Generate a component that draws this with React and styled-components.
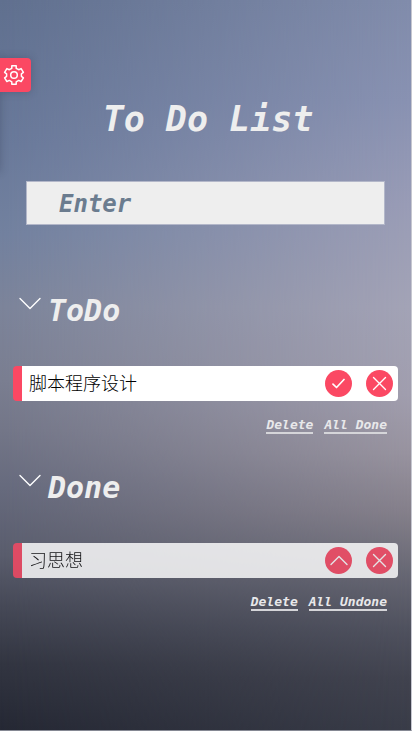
import React, { useState } from "react";
import styled, { createGlobalStyle } from "styled-components";

const GlobalStyle = createGlobalStyle`
  * { box-sizing: border-box; }
  body { margin: 0; }
  button, input { font: inherit; }
`;

const script = `"DejaVu Sans Mono", "Liberation Mono", monospace`;

const Page = styled.div`
  position: relative;
  isolation: isolate;
  min-height: 100vh;
  overflow: hidden;
  padding: 92px 13px 0;
  border-right: 1px solid #c6c7d0;
  border-bottom: 1px solid #858893;
  color: #eeeeee;
  font-family: ${script};
  background: linear-gradient(
    180deg, #60708f 0%, #69799a 20%, #72819f 32%, #7c849a 42%, #7a7e91 52%,
    #737688 59%, #666a7d 67%, #5a5d6d 76%, #464957 83%, #323541 91%, #252834 100%
  );

  &::before {
    content: "";
    position: absolute;
    inset: 0;
    z-index: -1;
    background: linear-gradient(
      180deg, #818cab 0%, #8992b2 14%, #999cb6 28%, #a3a3b6 42%, #a19eae 54%,
      #98939f 62%, #85808b 70%, #696975 78%, #50525f 86%, #41434f 93%, #393c48 100%
    );
    mask-image: linear-gradient(90deg, transparent, #000);
  }
`;

const Settings = styled.aside`
  position: absolute;
  top: 58px;
  left: -240px;
  width: 240px;
  height: 114px;
  box-shadow: 0 0 8px rgba(40, 50, 70, 0.3);
`;

const SettingsButton = styled.button`
  position: absolute;
  top: 0;
  left: 100%;
  display: grid;
  place-items: center;
  width: 31px;
  height: 34px;
  padding: 0 3px 0 0;
  border: 0;
  border-radius: 0 4px 4px 0;
  color: #ffffff;
  background: #fb4863;
  box-shadow: 0 0 8px rgba(40, 50, 70, 0.3);
`;

const Title = styled.h1`
  margin: 0;
  padding-left: 5px;
  font: italic bold 35px/54px ${script};
  text-align: center;
`;

const Entry = styled.form`
  margin: 35px 13px 0;
`;

const EntryInput = styled.input`
  display: block;
  width: 100%;
  height: 44px;
  padding: 2px 32px 0;
  border: 1px solid #b3b7c9;
  border-radius: 0;
  outline: 0;
  color: #6b7c8f;
  background: #eeeeee;
  font: italic bold 24px/32px ${script};

  &::placeholder { color: #6b7c8f; opacity: 1; }
`;

const Section = styled.section`
  padding-top: 64px;

  & + & { padding-top: 32px; }
`;

const SectionHeader = styled.header`
  display: flex;
  align-items: flex-start;
  gap: 6px;
  padding-left: 5px;
`;

const Fold = styled.button`
  display: flex;
  padding: 7px 0 0;
  border: 0;
  color: #ffffff;
  background: none;
`;

const SectionTitle = styled.h2`
  margin: 0;
  font: italic bold 30px/44px ${script};
`;

const List = styled.ul`
  margin: 33px 0 0;
  padding: 0;
  list-style: none;
`;

const Item = styled.li`
  display: flex;
  align-items: center;
  height: 35px;
  padding-right: 5px;
  border-left: 9px solid #fb4863;
  border-radius: 4px;
  background: #ffffff;
  opacity: ${({ $done }) => ($done ? 0.82 : 1)};
`;

const ItemText = styled.span`
  flex: 1;
  padding: 0 0 2px 7px;
  color: #000000;
  font: 300 18px/27px "Noto Sans CJK SC", sans-serif;
`;

const RoundButton = styled.button`
  display: grid;
  place-items: center;
  width: 27px;
  height: 27px;
  margin-left: 14px;
  padding: 0;
  border: 0;
  border-radius: 50%;
  color: #ffffff;
  background: #fb4863;
`;

const Actions = styled.div`
  display: flex;
  justify-content: flex-end;
  gap: 11px;
  padding: 16px 11px 0 0;
`;

const Action = styled.button`
  padding: 0;
  border: 0;
  border-bottom: 2px solid #d5d5d9;
  color: #e8e8ea;
  background: none;
  font: italic bold 13px/15px ${script};
`;

const Stroke = ({ width, height, d, weight = 1.4 }) => (
  <svg width={width} height={height} viewBox={`0 0 ${width} ${height}`} fill="none"
    stroke="currentColor" strokeWidth={weight} strokeLinecap="round" strokeLinejoin="round" aria-hidden="true">
    <path d={d} />
  </svg>
);

const Gear = () => (
  <svg width="22" height="22" viewBox="0 0 22 22" fill="none" stroke="currentColor"
    strokeWidth="1.5" strokeLinejoin="round" aria-hidden="true">
    <path d="M8.8 1.8h4.4v2.5l2.5 1.4 2.4-1.1 2.3 3.7-2 1.5v2.5l2 1.5-2.3 3.7-2.4-1.1-2.5 1.4v2.5H8.8v-2.5l-2.5-1.4-2.4 1.1-2.3-3.7 2-1.5V9.8l-2-1.5 2.3-3.7 2.4 1.1 2.5-1.4z" />
    <circle cx="11" cy="11" r="3.3" />
  </svg>
);

const marks = {
  check: <Stroke width={13} height={11} d="M1 6.2 4.5 9.5 12 1.5" weight={1.7} />,
  up: <Stroke width={18} height={11} d="M1 9.5 9 1.5l8 8" />,
};

function TaskSection({ title, task, done, mark, markLabel, allLabel }) {
  const [open, setOpen] = useState(true);
  return (
    <Section>
      <SectionHeader>
        <Fold type="button" aria-label={`Toggle ${title}`} aria-expanded={open} onClick={() => setOpen(!open)}>
          <Stroke width={24} height={15} d="M2 2.5 12 12.5l10-10" />
        </Fold>
        <SectionTitle>{title}</SectionTitle>
      </SectionHeader>
      {open && (
        <List>
          <Item $done={done}>
            <ItemText>{task}</ItemText>
            <RoundButton type="button" aria-label={markLabel}>{marks[mark]}</RoundButton>
            <RoundButton type="button" aria-label="Delete task">
              <Stroke width={15} height={15} d="m1.5 1.5 12 12m0-12-12 12" />
            </RoundButton>
          </Item>
        </List>
      )}
      <Actions>
        <Action type="button">Delete</Action>
        <Action type="button">{allLabel}</Action>
      </Actions>
    </Section>
  );
}

export default function App() {
  return (
    <Page>
      <GlobalStyle />
      <Settings>
        <SettingsButton type="button" aria-label="Settings"><Gear /></SettingsButton>
      </Settings>
      <Title>To Do List</Title>
      <Entry onSubmit={(event) => event.preventDefault()}>
        <EntryInput type="text" placeholder="Enter" aria-label="Enter a task" />
      </Entry>
      <main>
        <TaskSection title="ToDo" task="脚本程序设计" mark="check" markLabel="Mark done" allLabel="All Done" />
        <TaskSection title="Done" task="习思想" done mark="up" markLabel="Mark undone" allLabel="All Undone" />
      </main>
    </Page>
  );
}
